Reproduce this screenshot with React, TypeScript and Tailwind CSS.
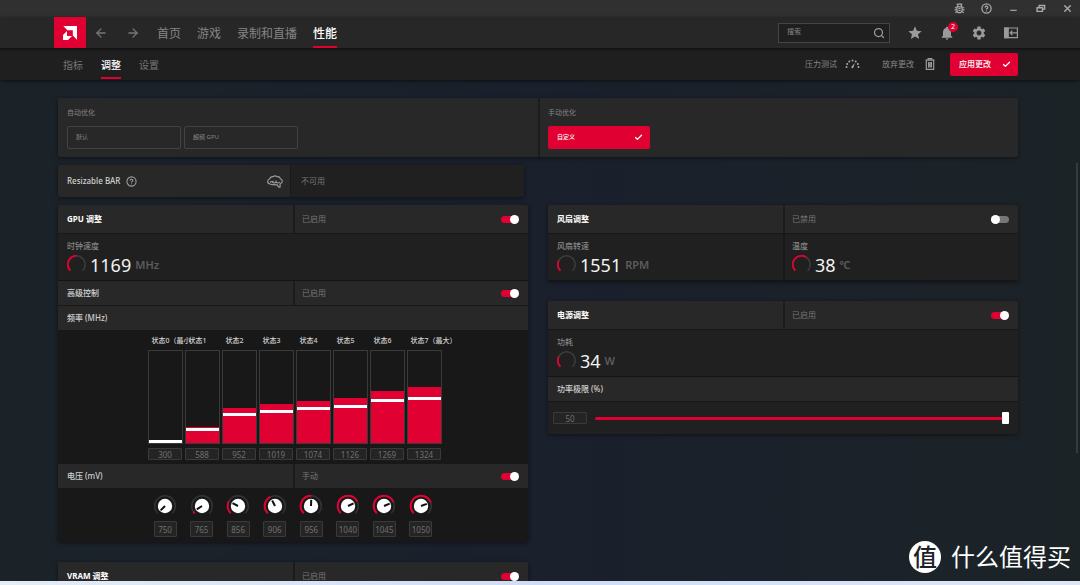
import type { ReactNode } from "react";
import { ArrowLeft, ArrowRight, Check, CircleHelp, Search, X } from "lucide-react";
import { MdNotifications, MdSettings, MdStar } from "react-icons/md";

const states = [
  { label: "状态0（最小", mhz: 300, fill: 0, level: 0 },
  { label: "状态1", mhz: 588, fill: 17, level: 12 },
  { label: "状态2", mhz: 952, fill: 38, level: 27 },
  { label: "状态3", mhz: 1019, fill: 42, level: 30 },
  { label: "状态4", mhz: 1074, fill: 46, level: 33 },
  { label: "状态5", mhz: 1126, fill: 49, level: 35 },
  { label: "状态6", mhz: 1269, fill: 57, level: 41 },
  { label: "状态7（最大）", mhz: 1324, fill: 61, level: 43 },
];

const voltages = [
  { mv: 750, angle: 0 },
  { mv: 765, angle: 12 },
  { mv: 856, angle: 72 },
  { mv: 906, angle: 108 },
  { mv: 956, angle: 137 },
  { mv: 1040, angle: 199 },
  { mv: 1045, angle: 202 },
  { mv: 1050, angle: 205 },
];

// 270 degree dial arc, starting at the lower left
function Arc({ c, r, sweep, width, className }: { c: number; r: number; sweep: number; width: number; className: string }) {
  if (sweep <= 0) return null;
  const point = (deg: number) => {
    const a = ((deg + 135) * Math.PI) / 180;
    return `${(c + r * Math.cos(a)).toFixed(2)} ${(c + r * Math.sin(a)).toFixed(2)}`;
  };
  return (
    <path
      d={`M${point(0)} A${r} ${r} 0 ${sweep > 180 ? 1 : 0} 1 ${point(sweep)}`}
      fill="none"
      strokeWidth={width}
      className={className}
    />
  );
}

function Toggle({ label, on = true }: { label: string; on?: boolean }) {
  return (
    <input
      type="checkbox"
      role="switch"
      aria-label={label}
      defaultChecked={on}
      className="relative h-[9px] w-[18px] shrink-0 appearance-none before:absolute before:inset-x-0 before:top-px before:h-[7px] before:rounded-full before:bg-[#777777] after:absolute after:left-0 after:top-0 after:size-[9px] after:rounded-full after:bg-white checked:before:bg-[#e00031] checked:after:left-[9px]"
    />
  );
}

function SplitRow({ title, status, on = true, bold = false, className }: { title: string; status: string; on?: boolean; bold?: boolean; className: string }) {
  return (
    <div className={`grid grid-cols-2 border-b border-[#181818] bg-[#282828] ${className}`}>
      <h2 className={`flex items-center pl-[9px] text-[8px] ${bold ? "font-bold text-white" : "font-medium text-[#d0d0d0]"}`}>
        {title}
      </h2>
      <div className="flex items-center justify-between border-l-2 border-[#1c1c1c] pl-[7px] pr-[9px] text-[8px] text-[#777777]">
        <span>{status}</span>
        <Toggle label={title} on={on} />
      </div>
    </div>
  );
}

function Metric({ label, value, unit, sweep, className = "pl-[9px]" }: { label: string; value: string; unit: string; sweep: number; className?: string }) {
  return (
    <div className={`border-b border-b-[#141414] bg-[#202020] pb-[5px] pt-[7px] ${className}`}>
      <p className="text-[8px] font-medium leading-[10px] text-[#858585]">{label}</p>
      <div className="mt-1 flex h-5 items-center">
        <svg viewBox="0 0 20 20" className="mr-[3px] size-5">
          <Arc c={9.5} r={8.7} sweep={270} width={1.5} className="stroke-[#3d3d3d]" />
          <Arc c={9.5} r={8.7} sweep={sweep} width={1.9} className="stroke-[#e00031]" />
        </svg>
        <span className="text-[18px] leading-5 text-[#f2f2f2]">{value}</span>
        <span className="ml-1 text-[11px] font-semibold leading-5 text-[#5c5c5c]">{unit}</span>
      </div>
    </div>
  );
}

function Card({ children }: { children: ReactNode }) {
  return <section className="overflow-hidden rounded-xs shadow-[0_1px_4px_rgba(0,0,0,0.5)]">{children}</section>;
}

function SubHeader({ children }: { children: ReactNode }) {
  return (
    <h3 className="flex h-[25px] items-center border-b border-[#181818] bg-[#282828] pl-[9px] text-[8px] font-medium text-[#d0d0d0]">
      {children}
    </h3>
  );
}

function TitleBar() {
  return (
    <div className="flex h-[17px] shrink-0 items-center justify-end gap-4 bg-[#303030] pr-[7px] text-[#a8a8a8]">
      <button aria-label="报告错误">
        <svg viewBox="0 0 12 12" className="size-[11px]" fill="none" stroke="currentColor" strokeWidth="1.3">
          <path d="M3.2 4.2h5.6v3.6a2.8 2.8 0 0 1-5.6 0z" />
          <path d="M4 4V3a2 2 0 0 1 4 0v1M4 1.8 3 .8M8 1.8l1-1M3 5.2H.8M3 7.5H.5M3.4 9.3l-2 1.4M9 5.2h2.2M9 7.5h2.5M8.6 9.3l2 1.4M4.8 6h2.4M4.8 8h2.4" />
        </svg>
      </button>
      <button aria-label="帮助"><CircleHelp className="size-[11px]" strokeWidth={2.8} /></button>
      <button aria-label="最小化">
        <svg viewBox="0 0 12 12" className="size-[11px]" fill="none" stroke="currentColor" strokeWidth="1.3">
          <path d="M2.5 8h7" />
        </svg>
      </button>
      <button aria-label="还原">
        <svg viewBox="0 0 12 12" className="size-[11px]" fill="none" stroke="currentColor" strokeWidth="1.5">
          <path d="M2.2 5.2h6v4h-6zM4.5 5V2.7h6v4H8.4" />
        </svg>
      </button>
      <button aria-label="关闭"><X className="size-[11px]" strokeWidth={3} /></button>
    </div>
  );
}

function NavBar() {
  return (
    <header className="z-20 flex h-[31px] shrink-0 items-center justify-between bg-[#272727] pl-[54px] pr-[62px] shadow-[0_1px_3px_rgba(0,0,0,0.6)]">
      <div className="flex h-full items-center">
        <a href="#home" aria-label="AMD" className="flex h-full w-8 items-center justify-center bg-[#e00031]">
          <svg viewBox="0 0 14 14" className="size-[14px]" fill="#fff">
            <path d="M.3 0H14v13.7L9.8 9.6V4.2H4.4z" />
            <path d="M4 5 0 9v5h5l4-4H4z" />
          </svg>
        </a>
        <button aria-label="后退" className="ml-2 text-[#777777]"><ArrowLeft className="size-[14px]" strokeWidth={2.2} /></button>
        <button aria-label="前进" className="ml-[18px] text-[#777777]"><ArrowRight className="size-[14px]" strokeWidth={2.2} /></button>
        <nav className="ml-[17px] flex h-full items-stretch gap-4 text-[12px] text-[#858585]">
          <a href="#home" className="flex items-center pt-0.5">首页</a>
          <a href="#games" className="flex items-center pt-0.5">游戏</a>
          <a href="#record" className="flex items-center pt-0.5">录制和直播</a>
          <a href="#performance" aria-current="page" className="flex items-center border-b-2 border-[#e00031] pt-1 font-medium text-white">性能</a>
        </nav>
      </div>
      <div className="flex items-center gap-[18px] text-[#9a9a9a]">
        <label className="flex h-5 w-28 items-center justify-between border border-[#454545] bg-[#1f1f1f] pl-2 pr-1">
          <input type="search" aria-label="搜索" placeholder="搜索" className="w-16 bg-transparent text-[7px] outline-none placeholder:text-[#858585]" />
          <Search className="size-3" strokeWidth={2.5} />
        </label>
        <button aria-label="收藏"><MdStar className="-mx-px size-4" /></button>
        <button aria-label="通知" className="relative">
          <MdNotifications className="-mx-px size-4" />
          <span className="absolute -right-1 -top-[3px] flex size-[10px] items-center justify-center rounded-full bg-[#e00031] text-[7px] leading-none text-white">2</span>
        </button>
        <button aria-label="设置"><MdSettings className="-mx-px size-4" /></button>
        <button aria-label="侧边栏">
          <svg viewBox="0 0 14 12" className="h-3 w-[14px]" fill="none" stroke="currentColor" strokeWidth="1.2">
            <path d="M.6 1h12.8v9.6H.6z" />
            <path d="M.6 1h3.6v9.6H.6z" fill="currentColor" />
            <path d="M13 5.8H6M8.4 3.6 6.2 5.8l2.2 2.2" />
          </svg>
        </button>
      </div>
    </header>
  );
}

function TabBar() {
  return (
    <div className="z-10 flex h-8 shrink-0 items-center justify-between bg-[#1f1f1f] pl-[63px] pr-[62px] shadow-[0_1px_4px_rgba(0,0,0,0.6)]">
      <nav className="flex h-full items-stretch gap-[18px] text-[10px] text-[#777777]">
        <a href="#metrics" className="flex items-center pt-0.5">指标</a>
        <a href="#tuning" aria-current="page" className="mb-px flex items-center border-b-2 border-[#e00031] pt-[5px] font-medium text-white">调整</a>
        <a href="#settings" className="flex items-center pt-0.5">设置</a>
      </nav>
      <div className="flex items-center text-[8px] text-[#858585]">
        <button className="flex items-center gap-2">
          压力测试
          <svg viewBox="0 0 15 10" className="h-[10px] w-[15px]" fill="#a8a8a8">
            <circle cx="1.5" cy="8" r="1" />
            <circle cx="2.2" cy="5" r="1" />
            <circle cx="4.3" cy="2.6" r="1" />
            <circle cx="7.5" cy="1.600" r="1" />
            <circle cx="10.700" cy="2.600" r="1" />
            <circle cx="12.800" cy="5" r="1" />
            <circle cx="13.500" cy="8" r="1" />
            <path d="m9.900 3.900-1.500 4.700a1.100 1.100 0 0 1-2-.9z" />
          </svg>
        </button>
        <button className="ml-[22px] flex items-center gap-[10px]">
          放弃更改
          <svg viewBox="0 0 12 12" className="size-3" fill="none" stroke="#9a9a9a" strokeWidth="1.2">
            <path d="M1.5 2.2h9M4.2 2V.7h3.6V2M2.3 2.4v8.9h7.4V2.4M4.6 4v5.6M6 4v5.6M7.4 4v5.6" />
          </svg>
        </button>
        <button className="ml-[14px] flex h-[23px] items-center gap-[11px] rounded-xs bg-[#e00031] pl-[9px] pr-[7px] font-medium text-white">
          应用更改 <Check className="size-[9px]" strokeWidth={3.5} />
        </button>
      </div>
    </div>
  );
}

function ClockTuning() {
  return (
    <Card>
      <SplitRow title="GPU 调整" status="已启用" bold className="h-[29px]" />
      <Metric label="时钟速度" value="1169" unit="MHz" sweep={137} />
      <SplitRow title="高级控制" status="已启用" className="h-[25px]" />
      <SubHeader>频率 (MHz)</SubHeader>
      <div className="flex justify-center gap-[2px] bg-[#181818] pb-1 pl-[3px] pt-[5px]">
        {states.map((s) => (
          <div key={s.mhz} className="w-[35px]">
            <p className="ml-1 w-0 whitespace-nowrap text-[7px] font-medium leading-[10px] text-[#d0d0d0]">{s.label}</p>
            <div className="relative mt-1 flex h-[94px] items-end border border-[#3a3a3a]">
              <div className="w-full bg-[#e00031]" style={{ height: `${s.fill}%` }} />
              <input
                type="range"
                min={0}
                max={89}
                defaultValue={s.level}
                aria-label={`${s.label} 频率`}
                className="absolute inset-0 m-0 h-full w-full appearance-none bg-transparent [direction:rtl] [writing-mode:vertical-lr] [&::-webkit-slider-runnable-track]:w-full [&::-webkit-slider-thumb]:h-[3px] [&::-webkit-slider-thumb]:w-[33px] [&::-webkit-slider-thumb]:appearance-none [&::-webkit-slider-thumb]:bg-white"
              />
            </div>
            <input
              defaultValue={s.mhz}
              aria-label={`${s.label} MHz`}
              className="mx-auto mt-1 block h-3 w-[34px] rounded-[1px] border border-[#3a3a3a] bg-[#242424] text-center text-[8px] leading-none text-[#707070]"
            />
          </div>
        ))}
      </div>
      <SplitRow title="电压 (mV)" status="手动" className="h-[25px]" />
      <div className="flex justify-center bg-[#181818] py-[5px]">
        <div className="flex w-[280px] justify-between">
          {voltages.map((v) => (
            <div key={v.mv} className="w-6">
              <svg viewBox="0 0 24 24" className="size-6">
                <Arc c={12} r={10.3} sweep={270} width={1.6} className="stroke-[#333333]" />
                <Arc c={12} r={10.3} sweep={v.angle} width={2} className="stroke-[#e00031]" />
                <circle cx="12" cy="12" r="7.2" fill="#fff" />
                <path d="M12 12V5.8" stroke="#111" strokeWidth="2" transform={`rotate(${v.angle - 135} 12 12)`} />
              </svg>
              <input
                defaultValue={v.mv}
                aria-label={`电压 ${v.mv}`}
                className="mx-auto mt-[3px] block h-4 w-[23px] rounded-[1px] border border-[#3a3a3a] bg-[#242424] text-center text-[8px] leading-none text-[#707070]"
              />
            </div>
          ))}
        </div>
      </div>
    </Card>
  );
}

export default function App() {
  return (
    <div className="relative flex h-screen flex-col overflow-hidden bg-[#1a202b] font-['Noto_Sans','Noto_Sans_CJK_SC',sans-serif]">
      <TitleBar />
      <NavBar />
      <TabBar />
      <main className="relative min-h-0 flex-1 overflow-hidden bg-linear-to-r from-[#1b2329] via-[#1a202c] to-[#1c2327] pl-[58px] pr-[62px] pt-[18px]">
        <section className="grid grid-cols-2 rounded-xs bg-[#282828] shadow-[0_1px_4px_rgba(0,0,0,0.5)]">
          <div className="px-[9px] pb-2 pt-[9px]">
            <h2 className="text-[7px] leading-[11px] text-[#858585]">自动优化</h2>
            <div className="mt-2 flex gap-[3px] text-[6px] text-[#858585]">
              <button className="h-[23px] w-[114px] rounded-xs border border-[#434343] pl-2 text-left">默认</button>
              <button className="h-[23px] w-[114px] rounded-xs border border-[#434343] pl-2 text-left">超频 GPU</button>
            </div>
          </div>
          <div className="border-l-2 border-[#1c1c1c] px-2 pb-2 pt-[9px]">
            <h2 className="text-[7px] leading-[11px] text-[#858585]">手动优化</h2>
            <button className="mt-2 flex h-[23px] w-[102px] items-center justify-between rounded-xs bg-[#e00031] pl-[9px] pr-[7px] text-[6px] font-medium text-white">
              自定义 <Check className="size-[9px]" strokeWidth={3.5} />
            </button>
          </div>
        </section>

        <div className="mt-2 grid grid-cols-2 gap-5">
          <section className="mr-1 grid h-8 grid-cols-2 overflow-hidden rounded-xs bg-[#202020] shadow-[0_1px_4px_rgba(0,0,0,0.5)]">
            <div className="flex items-center border-r border-[#181818] bg-[#282828] pl-[9px] pr-[7px] text-[8px] font-medium text-[#d0d0d0]">
              Resizable BAR
              <button aria-label="说明" className="ml-[6px] text-[#9a9a9a]"><CircleHelp className="size-[11px]" strokeWidth={2.4} /></button>
              <svg viewBox="0 0 16 13" className="ml-auto h-[13px] w-4" fill="none" stroke="#9a9a9a" strokeWidth="1.2" strokeLinejoin="round">
                <path d="M3.2 9C1.500 8.700.7 7.700.7 6.400.7 5 1.500 4.100 2.700 3.700 3.300 2.300 4.700 1.600 6 1.700c1.200-.9 3-.9 4.200 0 1.500-.1 2.800.7 3.300 2 1.200.4 1.800 1.400 1.800 2.600 0 1.400-.9 2.300-2.200 2.600v3.200h-1.300L10 9.700c-1 .4-2.100.3-2.900-.3-1.300.4-2.800.3-3.900-.4z" />
                <path d="M3 7.200c1.200-.7 2.300-.5 3 .3V5.700M6 7.500c1 .5 2.200.4 3-.3V5.500M9 7.200c1 .8 2.400.9 3.800.1" />
              </svg>
            </div>
            <p className="flex items-center pl-[10px] text-[8px] text-[#777777]">不可用</p>
          </section>
        </div>

        <div className="mt-2 grid grid-cols-2 items-start gap-5">
          <div className="flex flex-col gap-5">
            <ClockTuning />
            <Card>
              <SplitRow title="VRAM 调整" status="已启用" bold className="h-[29px]" />
            </Card>
          </div>
          <div className="flex flex-col gap-5">
            <Card>
              <SplitRow title="风扇调整" status="已禁用" on={false} bold className="h-[29px]" />
              <div className="grid grid-cols-2">
                <Metric label="风扇转速" value="1551" unit="RPM" sweep={70} />
                <Metric label="温度" value="38" unit="℃" sweep={168} className="border-l-2 border-l-[#181818] pl-[7px]" />
              </div>
            </Card>
            <Card>
              <SplitRow title="电源调整" status="已启用" bold className="h-[29px]" />
              <Metric label="功耗" value="34" unit="W" sweep={70} />
              <SubHeader>功率极限 (%)</SubHeader>
              <div className="flex h-8 items-center bg-[#202020] pl-[5px] pr-[9px]">
                <input
                  defaultValue={50}
                  aria-label="功率极限"
                  className="h-3 w-[34px] rounded-[1px] border border-[#3a3a3a] bg-[#242424] text-center text-[8px] leading-none text-[#707070]"
                />
                <input
                  type="range"
                  min={-50}
                  max={50}
                  defaultValue={50}
                  aria-label="功率极限 (%)"
                  className="ml-2 h-3 min-w-0 flex-1 appearance-none bg-transparent [&::-webkit-slider-runnable-track]:h-[3px] [&::-webkit-slider-runnable-track]:rounded-full [&::-webkit-slider-runnable-track]:bg-[#e00031] [&::-webkit-slider-thumb]:-mt-[5px] [&::-webkit-slider-thumb]:h-3 [&::-webkit-slider-thumb]:w-[7px] [&::-webkit-slider-thumb]:appearance-none [&::-webkit-slider-thumb]:rounded-[1px] [&::-webkit-slider-thumb]:bg-white"
                />
              </div>
            </Card>
          </div>
        </div>
        <div className="absolute right-[2px] top-[83px] h-[290px] w-[2px] bg-[#343a3f]" />
      </main>
      <div className="h-1 shrink-0 bg-linear-to-r from-[#e3edf6] via-[#cfdcf7] to-[#dde7f4]" />
      <div className="absolute bottom-3 right-[9px] z-30 flex items-center gap-[10px] text-white">
        <span className="flex size-8 items-center justify-center rounded-full bg-white text-[24px] font-medium leading-none text-[#1d2229]">值</span>
        <span className="text-[24px] leading-8">什么值得买</span>
      </div>
    </div>
  );
}
